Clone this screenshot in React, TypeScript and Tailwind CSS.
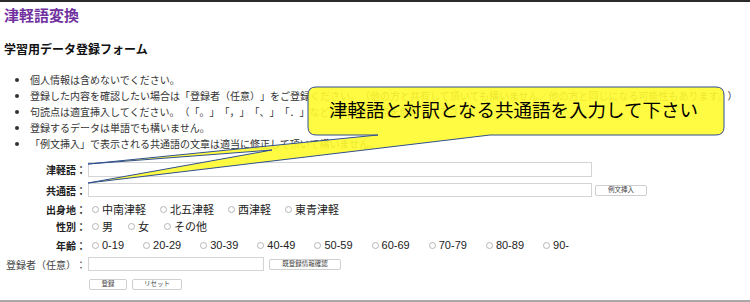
import React from 'react';

const regions = ['中南津軽', '北五津軽', '西津軽', '東青津軽'];
const genders = ['男', '女', 'その他'];
const ages = ['0-19', '20-29', '30-39', '40-49', '50-59', '60-69', '70-79', '80-89', '90-'];

const notes = [
  '個人情報は含めないでください。',
  '登録した内容を確認したい場合は「登録者（任意）」をご登録ください。（他の方と共有して頂いても構いません／他の方と同じになる可能性もあります。）',
  '句読点は適宜挿入してください。（「。」「，」「、」「．」など任意の句読点を使用して下さい）',
  '登録するデータは単語でも構いません。',
  '「例文挿入」で表示される共通語の文章は適当に修正して頂いて構いません。',
];

const Radio = ({ label, gap }: { label: string; gap: string }) => (
  <label className={`flex items-center ${gap}`}>
    <span className="w-[7px] h-[7px] rounded-full border border-[#b5b5b5] bg-white" />
    <span className="ml-[3px]">{label}</span>
  </label>
);

const SmallButton = ({ label, width }: { label: string; width: string }) => (
  <button
    type="button"
    className={`${width} h-[11px] flex items-center justify-center rounded-[2px] border border-[#cfcfcf] bg-white text-[6.5px] leading-none text-[#444]`}
  >
    {label}
  </button>
);

// callout balloon drawn over the page (two tails pointing at the inputs)
const Callout = () => (
  <div className="absolute inset-0 pointer-events-none">
    <svg width="750" height="302" className="absolute inset-0">
      <path
        d="M316 87 H716 Q724 87 724 95 V127 Q724 135 716 135 H490 L88 183 L272 150 L88 164 L378 135 H316 Q308 135 308 127 V95 Q308 87 316 87 Z"
        fill="#fffb2e"
        fillOpacity="0.9"
        stroke="#2f4f8f"
        strokeWidth="1"
        strokeLinejoin="round"
      />
    </svg>
    <div className="absolute left-[329px] top-[96px] text-[18.5px] leading-[26px] text-black font-['Noto_Sans_CJK_JP',sans-serif] whitespace-nowrap">
      津軽語と対訳となる共通語を入力して下さい
    </div>
  </div>
);

export default function App() {
  return (
    <div className="relative w-[750px] h-[302px] overflow-hidden bg-white font-['Liberation_Sans','Noto_Sans_CJK_JP',sans-serif] text-[#222] [text-spacing-trim:space-all]">
      <div className="h-[300px] border-t-2 border-[#2b2b2b]">
        <h1 className="mt-[3px] pl-[4px] text-[15px] leading-[20px] font-bold text-[#7030a0] font-['Noto_Sans_CJK_JP',sans-serif]">
          津軽語変換
        </h1>
        <h2 className="mt-[16px] pl-[4px] text-[12px] leading-[16px] font-bold text-[#111] font-['Noto_Sans_CJK_JP',sans-serif]">
          学習用データ登録フォーム
        </h2>

        <ul className="mt-[15px] pl-[30px] list-disc text-[10px] leading-[16px] text-[#333] font-['Noto_Sans_CJK_JP',sans-serif] whitespace-nowrap">
          {notes.map((n) => (
            <li key={n}>{n}</li>
          ))}
        </ul>

        <div className="mt-[10px] flex flex-col text-[10px]">
          <div className="flex items-center h-[15px]">
            <span className="w-[86px] text-right font-bold font-['Noto_Sans_CJK_JP',sans-serif]">津軽語：</span>
            <input className="ml-[2px] w-[504px] h-[15px] border border-[#d4d4d4] bg-white" />
          </div>

          <div className="mt-[6px] flex items-center h-[14px]">
            <span className="w-[86px] text-right font-bold font-['Noto_Sans_CJK_JP',sans-serif]">共通語：</span>
            <input className="ml-[2px] w-[504px] h-[14px] border border-[#d4d4d4] bg-white" />
            <div className="ml-[3px]">
              <SmallButton label="例文挿入" width="w-[52px]" />
            </div>
          </div>

          <div className="mt-[5px] flex items-center h-[14px]">
            <span className="w-[86px] text-right font-bold font-['Noto_Sans_CJK_JP',sans-serif]">出身地：</span>
            <div className="pl-[6px] flex items-center text-[11px] font-['Noto_Sans_CJK_JP',sans-serif]">
              {regions.map((r) => (
                <Radio key={r} label={r} gap="mr-[14px]" />
              ))}
            </div>
          </div>

          <div className="mt-[3px] flex items-center h-[14px]">
            <span className="w-[86px] text-right font-bold font-['Noto_Sans_CJK_JP',sans-serif]">性別：</span>
            <div className="pl-[6px] flex items-center text-[11px] font-['Noto_Sans_CJK_JP',sans-serif]">
              {genders.map((g) => (
                <Radio key={g} label={g} gap="mr-[15px]" />
              ))}
            </div>
          </div>

          <div className="mt-[5px] flex items-center h-[14px]">
            <span className="w-[86px] text-right font-bold font-['Noto_Sans_CJK_JP',sans-serif]">年齢：</span>
            <div className="pl-[6px] flex items-center text-[11px]">
              {ages.map((a) => (
                <Radio key={a} label={a} gap="mr-[19px]" />
              ))}
            </div>
          </div>

          <div className="mt-[5px] flex items-center h-[14px]">
            <span className="w-[86px] text-right text-[#444] font-['Noto_Sans_CJK_JP',sans-serif]">登録者（任意）：</span>
            <input className="ml-[2px] w-[176px] h-[14px] border border-[#d4d4d4] bg-white" />
            <div className="ml-[5px]">
              <SmallButton label="既登録情報確認" width="w-[72px]" />
            </div>
          </div>

          <div className="mt-[8px] pl-[89px] flex items-center gap-[5px]">
            <SmallButton label="登録" width="w-[38px]" />
            <SmallButton label="リセット" width="w-[50px]" />
          </div>
        </div>
      </div>
      <div className="h-[2px] bg-[#a8a8a8]" />

      <Callout />
    </div>
  );
}
